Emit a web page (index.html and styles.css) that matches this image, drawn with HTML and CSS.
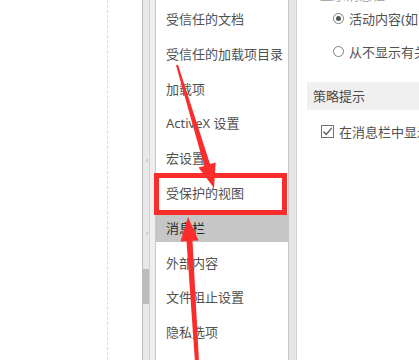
FILE: index.html
```html
<!DOCTYPE html>
<html lang="zh-CN">
<head>
    <meta charset="UTF-8">
    <meta name="viewport" content="width=device-width, initial-scale=1.0">
    <title>信任中心</title>
    <link rel="stylesheet" href="styles.css">
</head>
<body>
    <div class="page">
        <div class="blank">
            <div class="guide"></div>
        </div>

        <!-- left scroll strip -->
        <div class="scroll">
            <div class="lane">
                <div class="tick tick-a"></div>
                <div class="tick tick-b"></div>
                <div class="thumb"></div>
            </div>
            <div class="lane2"></div>
        </div>

        <ul class="nav">
            <li>受信任的文档</li>
            <li>受信任的加载项目录</li>
            <li>加载项</li>
            <li>ActiveX 设置</li>
            <li>宏设置</li>
            <li>受保护的视图</li>
            <li class="active">消息栏</li>
            <li>外部内容</li>
            <li>文件阻止设置</li>
            <li>隐私选项</li>
        </ul>

        <div class="split"></div>

        <div class="content">
            <div class="cut">显示消息栏</div>
            <div class="opt">
                <span class="radio on"></span>
                <span>活动内容(如 ActiveX 和宏)被阻止时，在所有应用程序中显示消息栏</span>
            </div>
            <div class="opt">
                <span class="radio"></span>
                <span>从不显示有关被阻止内容的信息</span>
            </div>
            <div class="section">策略提示</div>
            <div class="check-row">
                <span class="check">
                    <svg width="11" height="11" viewBox="0 0 11 11"><path d="M1.5 5.5 L4.2 8.5 L9.8 1.8" fill="none" stroke="#555" stroke-width="1.2"/></svg>
                </span>
                <span>在消息栏中显示策略提示</span>
            </div>
        </div>
    </div>

    <!-- annotations -->
    <div class="mark-box"></div>
    <svg class="arrows" width="419" height="360" viewBox="0 0 419 360">
        <polygon fill="#fb2c2c" points="176,65.3 178,64.7 210,164.1 215.7,162.4 214,188 198.5,167.6 204.2,165.9"/>
        <polygon fill="#fb2c2c" points="195,362 199,362 192.5,240.8 198.5,240.4 188,217 180.5,241.6 186.5,241.2"/>
    </svg>
</body>
</html>
```

FILE: styles.css
```css
/* General */
body {
    margin: 0;
    padding: 0;
    background: #fff;
    font-family: "Noto Sans", "Noto Sans CJK SC", sans-serif;
    font-size: 13px;
    color: #515151;
    overflow: hidden;
}
.page {
    display: flex;
    height: 360px;
    width: 419px;
    overflow: hidden;
}
.blank {
    width: 142px;
    flex-shrink: 0;
}
.guide {
    width: 108px;
    height: 100%;
    border-right: 1px dashed #dcdcdc;
    box-sizing: border-box;
}

/* scroll strip */
.scroll {
    width: 14px;
    flex-shrink: 0;
    display: flex;
    border-left: 1px solid #bdbdbd;
    border-right: 1px solid #c8c8c8;
    box-sizing: border-box;
}
.lane {
    width: 6px;
    background: #e9e9e9;
    border-right: 1px solid #d2d2d2;
}
.lane2 {
    flex: 1;
    background: #efefef;
}
.tick {
    width: 2px;
    height: 3px;
    margin-left: 3px;
    background: #cfcfcf;
}
.tick-a { margin-top: 159px; }
.tick-b { margin-top: 70px; }
.thumb {
    margin-top: 34px;
    height: 35px;
    background: #bcbcbc;
}

/* nav list */
.nav {
    list-style: none;
    margin: 0;
    padding: 5px 0 0;
    width: 132px;
    flex-shrink: 0;
}
.nav li {
    height: 28px;
    line-height: 28px;
    margin-bottom: 6.8px;
    padding-left: 10px;
    white-space: nowrap;
}
.nav li.active {
    background: #c6c6c6;
    color: #2a2a2a;
}

.split {
    width: 9px;
    flex-shrink: 0;
    background: #e6e6e6;
    border-left: 1px solid #c8c8c8;
    border-right: 1px solid #d0d0d0;
    box-sizing: border-box;
}

/* right panel */
.content {
    flex: 1;
    overflow: hidden;
    white-space: nowrap;
}
.cut {
    margin-top: -11px;
    height: 13px;
    line-height: 13px;
    padding-left: 23px;
    overflow: hidden;
    color: #aaa;
}
.opt {
    display: flex;
    align-items: center;
    gap: 5px;
    height: 33px;
    padding-left: 36px;
}
.radio {
    width: 11px;
    height: 11px;
    border: 1px solid #808080;
    border-radius: 50%;
    box-sizing: border-box;
    flex-shrink: 0;
    display: flex;
    align-items: center;
    justify-content: center;
}
.radio.on::after {
    content: "";
    width: 5px;
    height: 5px;
    border-radius: 50%;
    background: #555;
}
.section {
    margin: 14px 0 0 10px;
    height: 28px;
    line-height: 28px;
    padding-left: 6px;
    background: #f0f0f0;
    color: #4a4a4a;
}
.check-row {
    display: flex;
    align-items: center;
    gap: 5px;
    height: 28px;
    margin-top: 7px;
    padding-left: 24px;
}
.check {
    width: 13px;
    height: 13px;
    border: 1px solid #707070;
    box-sizing: border-box;
    display: flex;
    align-items: center;
    justify-content: center;
    flex-shrink: 0;
}

/* annotation overlay */
.mark-box {
    position: absolute;
    left: 154px;
    top: 173px;
    width: 133px;
    height: 42px;
    border: 5px solid #fb2c2c;
    box-sizing: border-box;
}
.arrows {
    position: absolute;
    left: 0;
    top: 0;
    pointer-events: none;
}
```
